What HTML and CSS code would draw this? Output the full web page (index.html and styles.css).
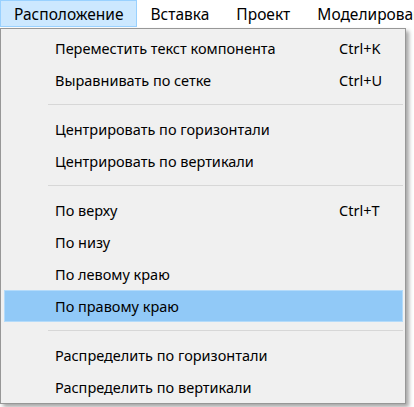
FILE: index.html
```html
<!DOCTYPE html>
<html lang="ru">
<head>
<meta charset="utf-8">
<link rel="stylesheet" href="styles.css">
</head>
<body>
<div class="menubar">
  <div class="mb-item active">Расположение</div>
  <div class="mb-item">Вставка</div>
  <div class="mb-item">Проект</div>
  <div class="mb-item">Моделирование</div>
</div>
<div class="menu">
  <div class="item"><span class="label">Переместить текст компонента</span><span class="key">Ctrl+K</span></div>
  <div class="item"><span class="label">Выравнивать по сетке</span><span class="key">Ctrl+U</span></div>
  <div class="sep"></div>
  <div class="item"><span class="label">Центрировать по горизонтали</span></div>
  <div class="item"><span class="label">Центрировать по вертикали</span></div>
  <div class="sep"></div>
  <div class="item"><span class="label">По верху</span><span class="key">Ctrl+T</span></div>
  <div class="item"><span class="label">По низу</span></div>
  <div class="item"><span class="label">По левому краю</span></div>
  <div class="item hover"><span class="label">По правому краю</span></div>
  <div class="sep"></div>
  <div class="item"><span class="label">Распределить по горизонтали</span></div>
  <div class="item"><span class="label">Распределить по вертикали</span></div>
</div>
</body>
</html>
```
FILE: styles.css
```css
html, body {
  margin: 0;
  padding: 0;
  background: #ffffff;
  overflow: hidden;
}
body {
  font-family: "Noto Sans", "Open Sans", sans-serif;
  font-size: 14.5px;
  color: #000;
  width: 414px;
  height: 407px;
}
.menubar {
  display: flex;
  height: 28px;
  background: #ffffff;
  white-space: nowrap;
  overflow: hidden;
  font-size: 15.5px;
}
.mb-item {
  display: flex;
  align-items: center;
  padding: 0 12px 0 13px;
  height: 27px;
  border: 1px solid transparent;
  box-sizing: border-box;
}
.mb-item.active {
  background: #cce8ff;
  border-color: #99d1ff;
}
.menu {
  width: 406px;
  box-sizing: border-box;
  border: 1px solid #979797;
  background: #f0f0f0;
  padding: 3px 2px 0 3px;
  box-shadow: 3px 3px 4px rgba(0, 0, 0, 0.35);
}
.item {
  height: 32px;
  display: flex;
  align-items: center;
  padding-left: 50px;
  box-sizing: border-box;
  border: 1px solid transparent;
}
.item.hover {
  background: #91c9f7;
  border-color: #b4dbfa;
}
.label {
  width: 284px;
}
.sep {
  height: 17px;
  display: flex;
  align-items: center;
  padding-left: 44px;
}
.sep::after {
  content: "";
  flex: 1;
  height: 1px;
  background: #d7d7d7;
}
```
